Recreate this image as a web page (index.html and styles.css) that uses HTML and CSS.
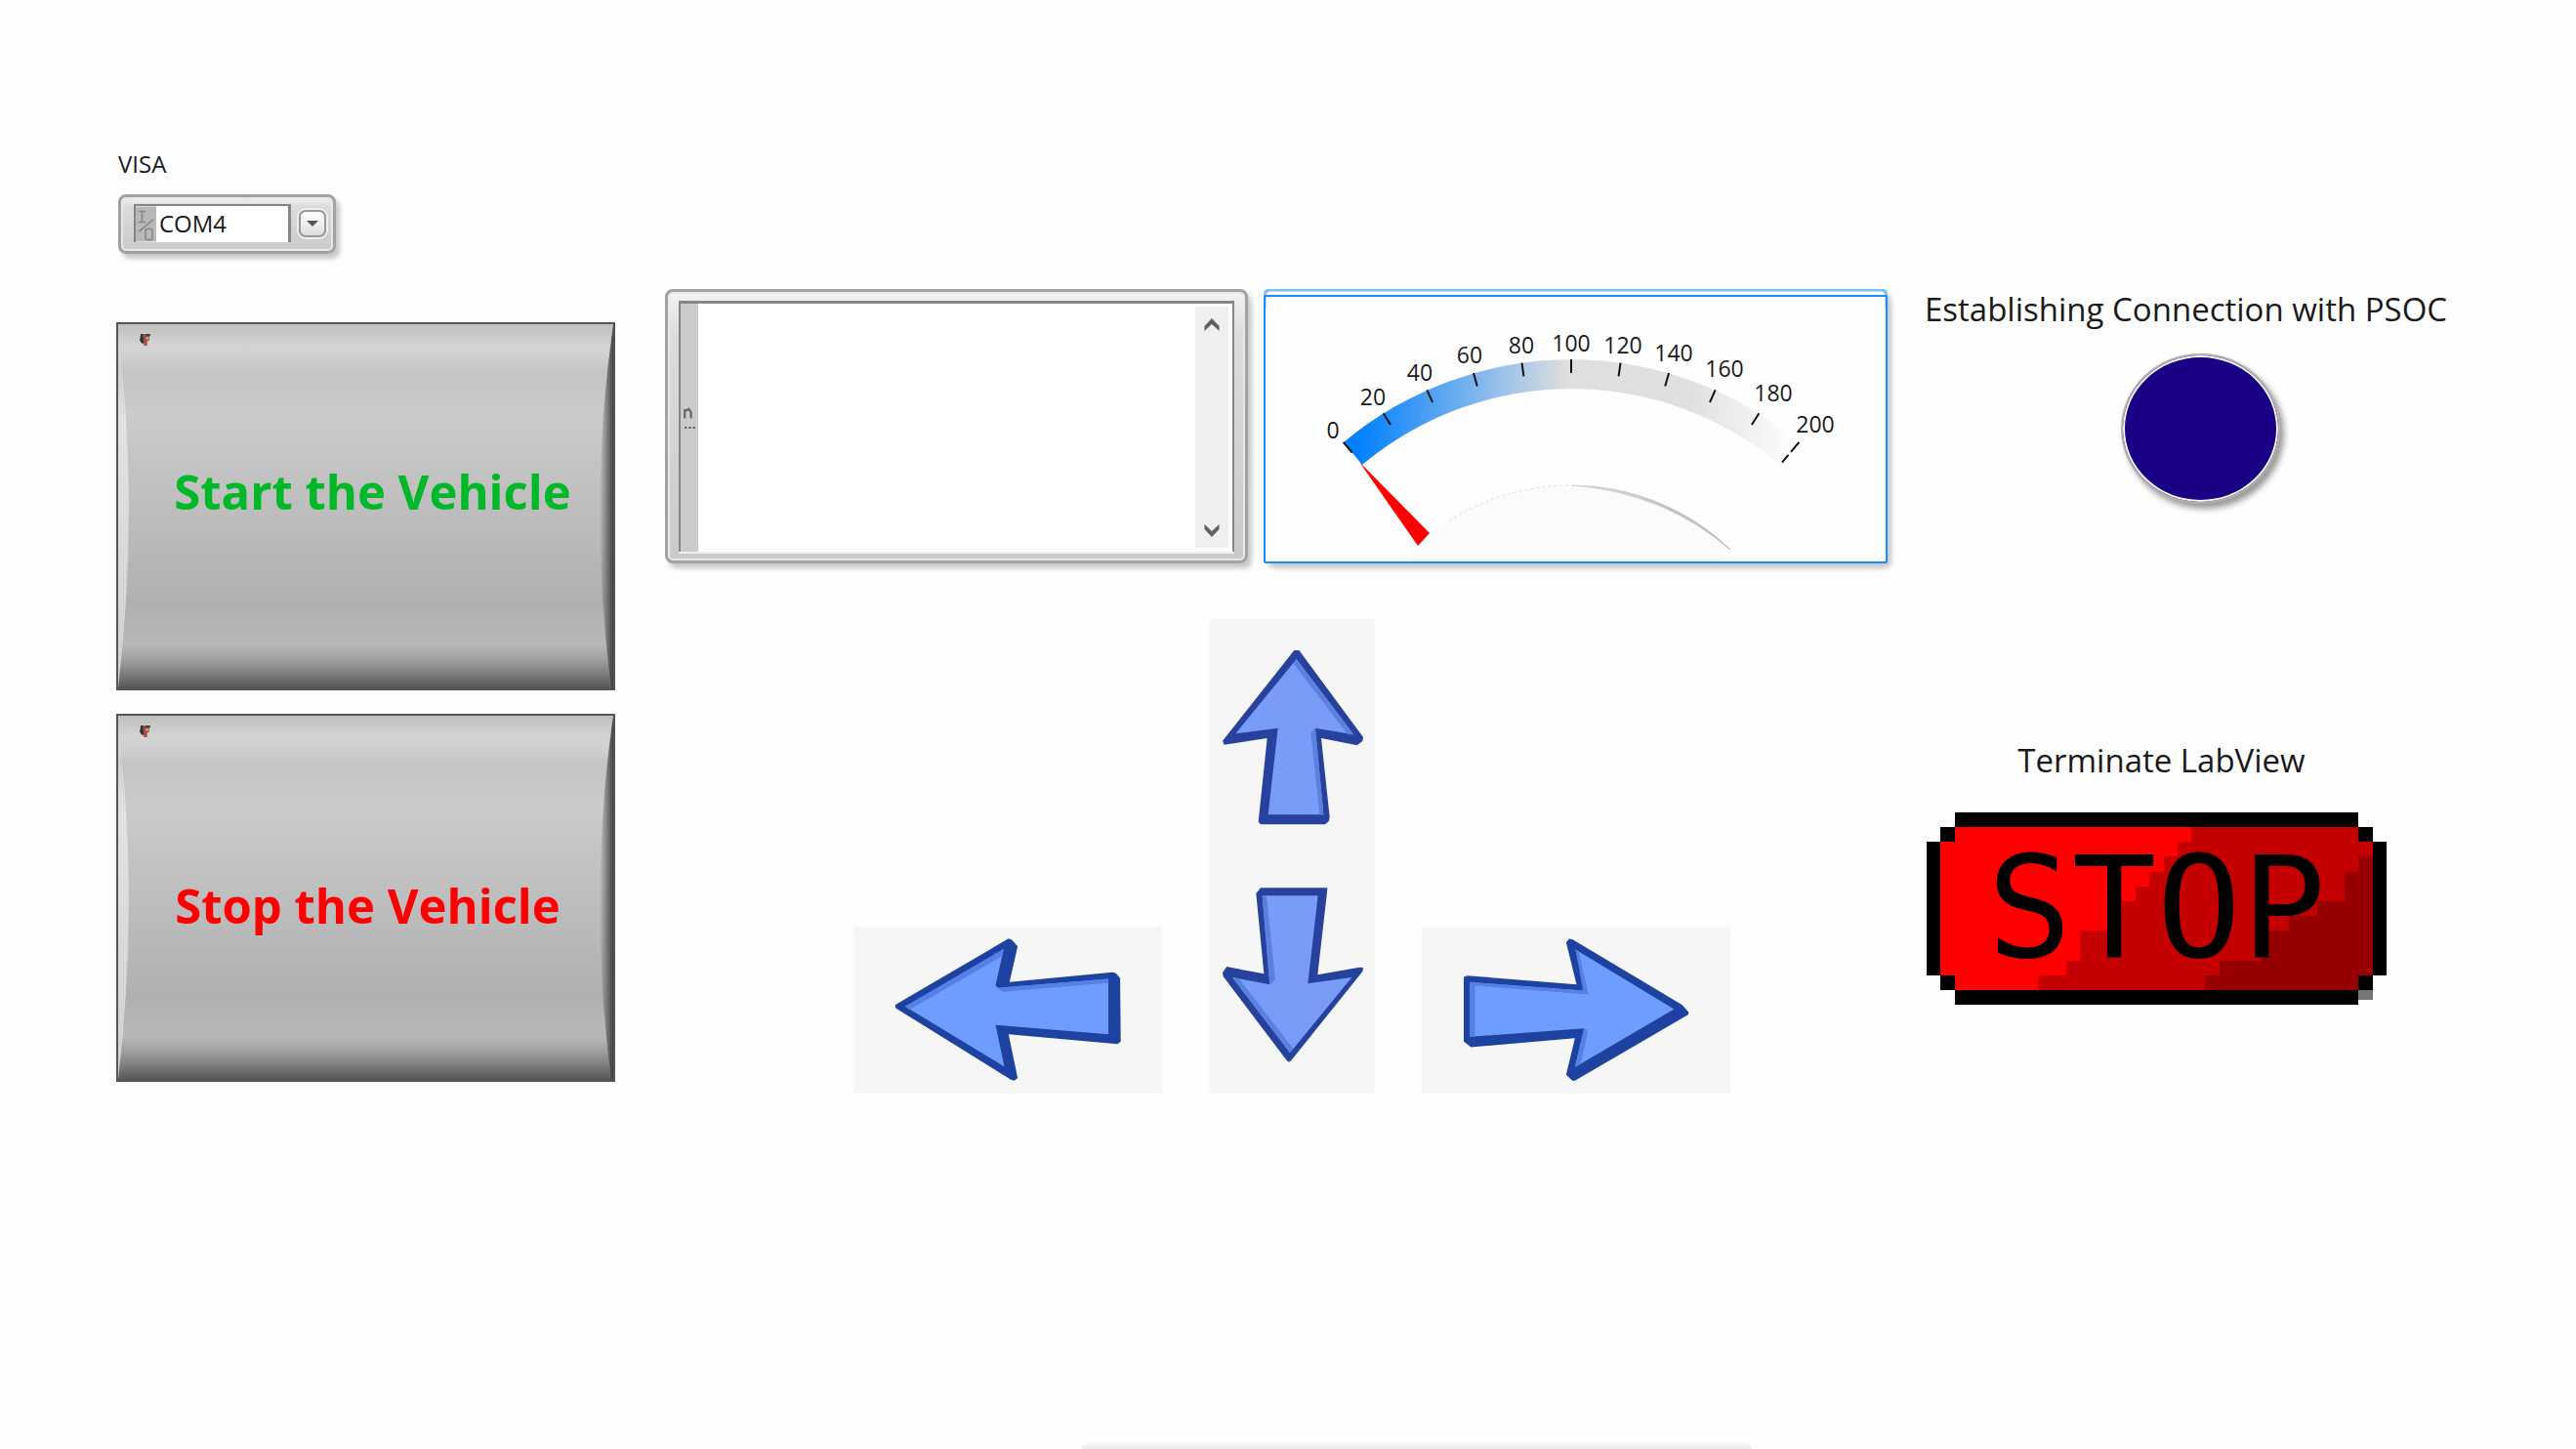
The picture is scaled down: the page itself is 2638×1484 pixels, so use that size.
FILE: index.html
```html
<!DOCTYPE html>
<html lang="en">
<head>
<meta charset="utf-8">
<meta name="viewport" content="width=device-width, initial-scale=1">
<title>Vehicle control panel</title>
<link rel="stylesheet" href="styles.css">
</head>
<body>
<main class="panel">
  <section class="col col-left">
    <label class="caption" for="visa">VISA</label>
    <div class="visa bezel">
      <span class="visa-field">
        <svg class="visa-io" viewBox="0 0 21 36" aria-hidden="true">
          <rect width="21" height="36" fill="#b8b8b8"/>
          <path d="M3 5h7M6.500 5v11M3 16h7M3 26L18 13" fill="none" stroke="#858585" stroke-width="1.500"/>
          <rect x="10" y="23" width="7" height="11" rx="2" fill="none" stroke="#858585" stroke-width="1.500"/>
        </svg>
      </span>
      <span class="visa-drop"></span>
      <select class="visa-select" id="visa"><option>COM4</option></select>
    </div>
    <button class="plate plate-start" type="button">
      <svg class="plate-sides" viewBox="0 0 511 377" preserveAspectRatio="none" aria-hidden="true">
        <defs>
          <linearGradient id="rim"><stop offset="0" stop-color="#444" stop-opacity="0"/><stop offset="1" stop-color="#444"/></linearGradient>
          <linearGradient id="glow" x1="0" y1="0" x2="0" y2="1"><stop offset="0" stop-color="#ddd" stop-opacity="0"/><stop offset=".25" stop-color="#e2e2e2"/><stop offset="1" stop-color="#d0d0d0"/></linearGradient>
        </defs>
        <path d="M0 10Q22 188 0 377z" fill="url(#glow)"/>
        <path d="M511 0Q484 188 509 377h2z" fill="url(#rim)"/>
      </svg>
      <svg class="plate-mark" viewBox="0 0 10 12" aria-hidden="true"><path d="M1 0h3v9h-2l-2-3z" fill="#333"/><path d="M3 1h6v5l-2 1v4h-3z" fill="#a54f3c"/><path d="M6 3h2v2h-2z" fill="#e0b8a8"/><path d="M5 0h5v2h-5z" fill="#444"/></svg>
      <span>Start the Vehicle</span>
    </button>
    <button class="plate plate-stop" type="button">
      <svg class="plate-sides" viewBox="0 0 511 377" preserveAspectRatio="none" aria-hidden="true">
        <path d="M0 10Q22 188 0 377z" fill="url(#glow)"/>
        <path d="M511 0Q484 188 509 377h2z" fill="url(#rim)"/>
      </svg>
      <svg class="plate-mark" viewBox="0 0 10 12" aria-hidden="true"><path d="M1 0h3v9h-2l-2-3z" fill="#333"/><path d="M3 1h6v5l-2 1v4h-3z" fill="#a54f3c"/><path d="M6 3h2v2h-2z" fill="#e0b8a8"/><path d="M5 0h5v2h-5z" fill="#444"/></svg>
      <span>Stop the Vehicle</span>
    </button>
  </section>

  <section class="col col-mid">
    <div class="displays">
      <div class="log bezel">
        <div class="log-field">
          <svg class="log-mode" viewBox="0 0 17 40" aria-hidden="true">
            <path d="M4 11V2M4 4L8 2 10 5V11" fill="none" stroke="#666" stroke-width="2"/>
            <path d="M4 20h2M8 20h2M12 20h2" stroke="#555" stroke-width="2"/>
          </svg>
          <textarea class="log-text" aria-label="Serial output" readonly></textarea>
          <div class="log-scroll">
            <button class="scroll-btn" type="button" aria-label="Scroll up"><svg viewBox="0 0 16 13"><path d="M8 0L15.500 8V13L8 6 .500 13V8z" fill="#606060"/></svg></button>
            <button class="scroll-btn" type="button" aria-label="Scroll down"><svg viewBox="0 0 16 13"><path d="M8 13L15.500 5V0L8 7 .500 0V5z" fill="#606060"/></svg></button>
          </div>
        </div>
      </div>
      <div class="meter">
        <svg class="meter-dial" viewBox="0 0 639 281" role="img" aria-label="Speed, 0 of 200">
          <defs>
            <linearGradient id="band" gradientUnits="userSpaceOnUse" x1="95" y1="0" x2="545" y2="0">
              <stop offset="0" stop-color="#007fff"/><stop offset=".48" stop-color="#dfdfdf"/><stop offset=".76" stop-color="#e0e0e0"/><stop offset="1" stop-color="#fefefe"/>
            </linearGradient>
            <linearGradient id="hub" gradientUnits="userSpaceOnUse" x1="190" y1="0" x2="478" y2="0">
              <stop offset="0" stop-color="#f4f4f4"/><stop offset=".5" stop-color="#d4d4d4"/><stop offset="1" stop-color="#b8b8b8"/>
            </linearGradient>
          </defs>
          <path d="M150 269A234 234 0 0 1 478 267L466 278H150z" fill="#fbfbfb"/>
          <path d="M1 20V7Q1 1 7 1H632Q638 1 638 7V20" fill="none" stroke="#7dbcff" stroke-width="3"/>
          <path d="M1 7H638M1 7V280M1 280H638M638 7V280" fill="none" stroke="#1a8cff" stroke-width="2"/>
          <path d="M82 157A363 363 0 0 1 548 157L529 180A333 333 0 0 0 101 180z" fill="url(#band)"/>
          <path d="M315 201A234 234 0 0 1 478 267Q410 208 315 201z" fill="url(#hub)" stroke="url(#hub)" stroke-width="1"/>
          <path d="M190 237A234 234 0 0 1 315 201" fill="none" stroke="#ddd" stroke-dasharray="3 3"/>
          <path d="M98 177L170 250 158 263z" fill="#f00"/>
          <g stroke="#111" stroke-width="2">
            <path d="M315 72V86" transform="rotate(-40 315 435)"/><path d="M315 72V86" transform="rotate(-32 315 435)"/>
            <path d="M315 72V86" transform="rotate(-24 315 435)"/><path d="M315 72V86" transform="rotate(-16 315 435)"/>
            <path d="M315 72V86" transform="rotate(-8 315 435)"/><path d="M315 72V86"/>
            <path d="M315 72V86" transform="rotate(8 315 435)"/><path d="M315 72V86" transform="rotate(16 315 435)"/>
            <path d="M315 72V86" transform="rotate(24 315 435)"/><path d="M315 72V86" transform="rotate(32 315 435)"/>
            <path d="M315 72V85M315 89V99" transform="rotate(40 315 435)"/>
          </g>
          <g class="meter-num">
            <text x="71" y="153">0</text><text x="112" y="119">20</text><text x="160" y="94">40</text><text x="211" y="76">60</text>
            <text x="264" y="66">80</text><text x="315" y="64">100</text><text x="368" y="66">120</text><text x="420" y="74">140</text>
            <text x="472" y="90">160</text><text x="522" y="115">180</text><text x="565" y="147">200</text>
          </g>
        </svg>
      </div>
    </div>

    <div class="pad">
      <button class="pad-side" type="button" aria-label="Left">
        <svg viewBox="38 30 949 512"><path d="M166 270L515 66 525 70 543 90 518 200 835 170 845 173 858 188 860 383 850 390 515 360 543 495 533 503 522 500 168 280z" fill="#1d42a0"/><path d="M197 275L500 98 475 210 482 218 822 190V360L475 332 502 460z" fill="#6f9dff"/><path d="M197 275L500 98 495 120 210 285zM480 218L822 190V203L497 230z" fill="#5580e8"/></svg>
      </button>
      <div class="pad-column">
        <button class="pad-up" type="button" aria-label="Forward">
          <svg viewBox="53 42 510 729"><path d="M315 138H330L527 405 525 417 508 430 398 408 424 650 422 662 410 673H212L205 665 232 408 100 428 95 416z" fill="#27429c"/><path d="M322 165L498 397 380 377 405 643H235L265 377 135 394z" fill="#789cf7"/><path d="M322 165L498 397 480 397 312 178zM366 390L380 377 405 643H393z" fill="#5c80e0"/></svg>
        </button>
        <button class="pad-down" type="button" aria-label="Reverse">
          <svg viewBox="53 771 510 729"><path d="M212 868H417L415 890 387 1135 515 1112 527 1113 525 1125 306 1398 299 1403 292 1398 97 1140 95 1128 108 1110 222 1132 198 885z" fill="#27429c"/><path d="M217 892H388L357 1162 492 1143 302 1375 125 1143 240 1165z" fill="#789cf7"/><path d="M125 1143L302 1375 312 1362 145 1146zM217 892H230L257 1150 240 1165z" fill="#5c80e0"/></svg>
        </button>
      </div>
      <button class="pad-side" type="button" aria-label="Right">
        <svg viewBox="49 30 949 512"><path d="M178 185L188 180 525 207 493 78 502 67 512 68 850 270 870 293 868 300 520 503 512 503 493 485 520 372 200 400 178 382z" fill="#1d42a0"/><path d="M197 200L545 226 548 218 522 100 825 283 520 462 548 342 197 368z" fill="#6f9dff"/><path d="M197 200H213V367L197 368zM522 100L532 107 562 238 545 226zM548 342L560 350 538 450 520 462zM197 200L545 226 562 238 213 211z" fill="#5580e8"/></svg>
      </button>
    </div>
  </section>

  <section class="col col-right">
    <h2 class="heading">Establishing Connection with PSOC</h2>
    <div class="led" role="img" aria-label="Connection indicator"></div>
    <div class="terminate">
      <h2 class="heading">Terminate LabView</h2>
      <button class="stop" type="button">
        <svg class="stop-art" viewBox="0 0 33 13" preserveAspectRatio="none" shape-rendering="crispEdges" aria-hidden="true">
          <path d="M2 0H31V1H32V2H33V11H32V12H31V13H2V12H1V11H0V2H1V1H2z" fill="#000"/>
          <path d="M2 1H31V2H32V11H31V12H2V11H1V2H2z" fill="#f00"/>
          <path d="M19 1H31V2H32V11H31V12H8V11H10V10H11V8H13V7H14V6H14V6H15V5H16V4H17V3H18V2H19z" fill="#c40000"/>
          <path d="M31 3H32V11H31V12H20V11H21V10H24V8H26V7H28V6H30V4H31z" fill="#960000"/>
          <rect x="31" y="12" width="1" height=".7" fill="#777"/>
        </svg>
        <span class="stop-text">STOP</span>
      </button>
    </div>
  </section>
</main>
<footer class="dock"></footer>
</body>
</html>
```
FILE: styles.css
```css
* { box-sizing: border-box; }

body {
  margin: 0;
  min-height: 100vh;
  display: flex;
  flex-direction: column;
  background: #fefefe;
  color: #1a1a1a;
  font-family: "Open Sans", "Noto Sans", sans-serif;
  font-size: 24px;
}

button {
  padding: 0;
  border: 0;
  background: none;
  font: inherit;
  color: inherit;
  cursor: pointer;
}

svg { display: block; }

.panel {
  display: grid;
  grid-template-columns: 511fr 1341fr 540fr;
  padding: 152px 127px 0 119px;
}

.col {
  min-width: 0;
  display: flex;
  flex-direction: column;
}

.col-mid { padding: 144px 38px 0 51px; }
.col-right { padding-top: 141px; }

/* Rounded silver frame shared by the sunken fields */
.bezel {
  border: 3px solid #a2a2a2;
  border-radius: 8px;
  background: linear-gradient(#f4f4f4, #dcdcdc 16%, #cacaca);
  box-shadow: inset 0 0 0 2px #e8e8e8, 4px 5px 5px rgba(0, 0, 0, .22);
}

.caption {
  padding-left: 2px;
  line-height: 32px;
}

.visa {
  display: grid;
  grid-template-columns: 24px 1fr 43px;
  width: 223px;
  height: 61px;
  margin: 15px 0 70px 2px;
  padding: 7px 0 9px 13px;
}

.visa-field {
  grid-area: 1 / 1 / 2 / 3;
  border: solid #858585;
  border-width: 2px 3px 0 2px;
  background: #fff;
}

.visa-io { width: 21px; height: 37px; }

.visa-drop {
  grid-area: 1 / 3;
  place-self: center;
  display: grid;
  place-items: center;
  width: 28px;
  height: 28px;
  border: 2px solid #999;
  border-radius: 7px;
  background: linear-gradient(#fff, #ddd);
  box-shadow: 0 0 0 2px #eee;
}

.visa-drop::after {
  content: "";
  border: solid transparent;
  border-width: 6px 6px 0;
  border-top-color: #555;
}

.visa-select {
  grid-area: 1 / 2 / 2 / 4;
  appearance: none;
  min-width: 0;
  padding: 0 0 0 2px;
  border: 0;
  background: none;
  color: #1a1a1a;
  font: inherit;
}

.plate {
  position: relative;
  height: 377px;
  border: 2px solid #555;
  background: linear-gradient(#bfbfbf, #d4d4d4 6%, #d0d0d0 9%, #c4c4c4 13%, #cbcbcb 25%, #bfbfbf 48%, #b0b0b0 77%, #b8b8b8 88%, #a0a0a0 92%, #747474 97%, #555);
  font-size: 49px;
  font-weight: 700;
}

.plate + .plate { margin-top: 24px; }
.plate-start { padding: 0 0 32px 14px; color: #00b828; }
.plate-stop { padding: 14px 0 0 4px; color: #f00; }

.plate-sides {
  position: absolute;
  inset: 0;
  width: 100%;
  height: 100%;
}

.plate-mark {
  position: absolute;
  top: 10px;
  left: 22px;
  width: 11px;
  height: 13px;
}

.plate span { position: relative; }

.displays {
  display: grid;
  grid-template-columns: 597fr 639fr;
  gap: 16px;
}

.log { padding: 9px 11px; }

.log-field {
  display: flex;
  height: 257px;
  border: solid #868686;
  border-width: 3px 2px 0 2px;
  background: #fff;
  box-shadow: 0 2px 0 #f0f0f0;
}

.log-mode {
  width: 18px;
  height: 100%;
  background: #cbcbcb;
}

.log-text {
  flex: 1;
  min-width: 0;
  border: 0;
  padding: 4px 8px;
  resize: none;
  outline: 0;
  background: none;
  font: inherit;
}

.log-scroll {
  display: flex;
  flex-direction: column;
  justify-content: space-between;
  width: 34px;
  margin: 3px 4px 4px 0;
  background: #efefef;
}

.scroll-btn {
  display: grid;
  place-items: center;
  height: 36px;
}

.scroll-btn svg { width: 16px; height: 13px; }

.meter {
  border-radius: 8px;
  background: #fefefe;
  box-shadow: 4px 5px 5px rgba(0, 0, 0, .22);
}

.meter-dial { width: 100%; }

.meter-num {
  font-size: 23px;
  text-anchor: middle;
  fill: #1a1a1a;
}

.pad {
  display: flex;
  justify-content: center;
  align-items: flex-end;
  gap: 48px;
  margin-top: 57px;
  padding-left: 31px;
}

.pad button { background: #f6f6f6; }
.pad-side svg { width: 316px; height: 171px; }
.pad-column { display: flex; flex-direction: column; }
.pad-column svg { width: 170px; height: 243px; }

.heading {
  margin: 0;
  font-size: 33px;
  font-weight: 400;
  line-height: 48px;
  white-space: nowrap;
}

.led {
  align-self: center;
  width: 163px;
  height: 154px;
  margin: 21px 0 239px 24px;
  border: 2px solid #b0b0b0;
  border-radius: 50%;
  background: #1a0084;
  box-shadow: inset 0 0 0 2px #f4f4f4, 4px 5px 6px rgba(0, 0, 0, .4);
}

.terminate {
  display: flex;
  flex-direction: column;
  align-items: center;
  align-self: flex-start;
  gap: 29px;
  padding-left: 2px;
}

.terminate .heading { padding-left: 10px; }

.stop {
  display: grid;
  width: 471px;
  height: 197px;
}

.stop-art,
.stop-text { grid-area: 1 / 1; }

.stop-art { width: 100%; height: 100%; }

.stop-text {
  place-self: center;
  color: #000;
  font-family: "DejaVu Sans Mono", monospace;
  font-size: 144px;
  line-height: 197px;
}

.dock {
  width: 26%;
  height: 8px;
  margin: auto 0 0 42%;
  border-radius: 8px 8px 0 0;
  background: linear-gradient(#fefefe, #ececec);
}
```
